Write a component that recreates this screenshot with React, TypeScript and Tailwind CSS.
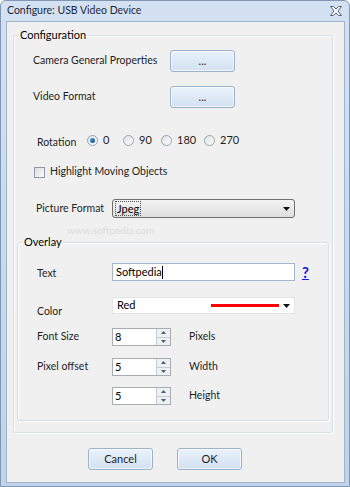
import { ReactNode } from "react";

const font = { fontFamily: "'Segoe UI', Lato, 'Liberation Sans', sans-serif" };

function WinButton({ label, className = "" }: { label: string; className?: string }) {
  return (
    <div
      className={`h-[22px] w-[65px] flex items-center justify-center rounded-[3px] border border-[#9bb2cc] bg-gradient-to-b from-[#eaf2fb] to-[#d2e1f2] shadow-[inset_0_0_0_1px_rgba(255,255,255,0.7)] text-[11px] text-[#1e1e1e] ${className}`}
    >
      {label}
    </div>
  );
}

function Radio({ checked, label, className = "" }: { checked?: boolean; label: string; className?: string }) {
  return (
    <div className={`flex items-center shrink-0 ${className}`}>
      <span className="w-[11px] h-[11px] rounded-full border border-[#97a3b0] bg-gradient-to-br from-[#dfe2e6] to-[#fdfdfd] flex items-center justify-center">
        {checked && <span className="w-[5px] h-[5px] rounded-full bg-gradient-to-br from-[#4a9ad8] to-[#0f4f8c]" />}
      </span>
      <span className="ml-[5px] text-[11px] text-[#1e1e1e]">{label}</span>
    </div>
  );
}

function Arrow() {
  return (
    <svg width="7" height="4" viewBox="0 0 7 4" className="shrink-0">
      <path d="M0 0 H7 L3.5 4 Z" fill="#111" />
    </svg>
  );
}

function Spin({ value }: { value: string }) {
  return (
    <div className="w-[59px] h-[18px] flex border border-[#a9acb3] bg-white shrink-0">
      <div className="flex-1 pl-[2px] text-[11px] leading-[16px] text-black">{value}</div>
      <div className="w-[14px] flex flex-col border-l border-[#c8ccd2] bg-[#eef0f3]">
        <div className="flex-1 flex items-center justify-center border-b border-[#c8ccd2]">
          <svg width="5" height="3" viewBox="0 0 5 3"><path d="M0 3 L2.5 0 L5 3 Z" fill="#4b5b70" /></svg>
        </div>
        <div className="flex-1 flex items-center justify-center">
          <svg width="5" height="3" viewBox="0 0 5 3"><path d="M0 0 H5 L2.5 3 Z" fill="#4b5b70" /></svg>
        </div>
      </div>
    </div>
  );
}

function Group({ title, className = "", children }: { title: string; className?: string; children: ReactNode }) {
  return (
    <fieldset className={`border border-[#d5dfe5] rounded-[3px] shadow-[inset_1px_1px_0_#ffffff,1px_1px_0_#ffffff] ${className}`}>
      <legend className="ml-[5px] px-[1px] text-[11px] leading-[14px] text-black">{title}</legend>
      {children}
    </fieldset>
  );
}

const label = "text-[10.5px] text-[#1e1e1e] whitespace-nowrap shrink-0";

export default function App() {
  return (
    <div style={font} className="w-[350px] h-[487px] flex flex-col bg-gradient-to-b from-[#d3e1f2] to-[#c0d3ea] border border-[#7f97b3] rounded-t-[6px] overflow-hidden relative">
      {/* title bar */}
      <div className="h-[20px] flex items-center justify-between pl-[6px] pr-[7px]">
        <span className="text-[10.5px] text-[#1d2838] whitespace-nowrap">Configure: USB Video Device</span>
        <svg width="12" height="10" viewBox="0 0 12 10">
          <path
            d="M0.5 0.5 H3.5 L6 3 L8.5 0.5 H11.5 L8 5 L11.5 9.5 H8.5 L6 7 L3.5 9.5 H0.5 L4 5 Z"
            fill="#f4f7fb"
            stroke="#4f6580"
            strokeWidth="1"
            strokeLinejoin="round"
          />
        </svg>
      </div>

      {/* client area */}
      <div className="flex-1 ml-[5px] mr-[4px] mb-[3px] bg-[#f0f0f0] border border-[#9fb3ca] pt-[6px] pl-[6px] relative">
        {/* faint watermark */}
        <div className="absolute left-[60px] top-[201px] text-[10px] text-[#dcdcdc]">www.softpedia.com</div>

        <Group title="Configuration" className="relative w-[320px] h-[405px]">
          <div className="mt-[8px] flex items-center pl-[19px]">
            <span className={`w-[137px] ${label}`}>Camera General Properties</span>
            <WinButton label="..." />
          </div>
          <div className="mt-[14px] flex items-center pl-[19px]">
            <span className={`w-[137px] ${label}`}>Video Format</span>
            <WinButton label="..." />
          </div>

          <div className="mt-[24px] h-[16px] flex items-center pl-[23px]">
            <span className={`w-[50px] translate-y-[3px] ${label}`}>Rotation</span>
            <Radio checked label="0" className="w-[36px]" />
            <Radio label="90" className="w-[38px]" />
            <Radio label="180" className="w-[43px]" />
            <Radio label="270" />
          </div>

          <div className="mt-[16px] h-[16px] flex items-center pl-[20px]">
            <span className="w-[11px] h-[11px] border border-[#8e9aa8] bg-gradient-to-br from-[#dcdfe3] to-[#fafafa]" />
            <span className={`ml-[5px] ${label}`}>Highlight Moving Objects</span>
          </div>

          <div className="mt-[19px] h-[19px] flex items-center pl-[22px]">
            <span className={`w-[76px] ${label}`}>Picture Format</span>
            <div className="w-[183px] h-[19px] flex items-center justify-between rounded-[3px] border border-[#707070] bg-gradient-to-b from-[#f4f4f4] to-[#dedede] pl-[2px] pr-[4px]">
              <span className="px-[1px] text-[11px] leading-[13px] text-black border border-dotted border-[#555]">Jpeg</span>
              <Arrow />
            </div>
          </div>

          <Group title="Overlay" className="mt-[17px] ml-[3px] w-[312px] h-[186px]">
            <div className="mt-[14px] h-[18px] flex items-center pl-[19px]">
              <span className={`w-[75px] translate-y-[2px] ${label}`}>Text</span>
              <div className="w-[183px] h-[18px] flex items-center border border-[#a3b8d0] bg-white pl-[3px] text-[11px] text-black">
                Softpedia<span className="w-px h-[13px] bg-black" />
              </div>
              <span className="ml-[7px] text-[15px] leading-[16px] font-bold text-[#1515e8] underline">?</span>
            </div>

            <div className="mt-[16px] h-[17px] flex items-center pl-[19px]">
              <span className={`w-[75px] translate-y-[6px] ${label}`}>Color</span>
              <div className="w-[183px] h-[17px] flex items-center border border-[#e2e3e5] bg-white pl-[4px] pr-[4px]">
                <span className="w-[94px] text-[11px] text-black">Red</span>
                <span className="w-[68px] h-[3px] bg-[#ff0000]" />
                <span className="flex-1" />
                <Arrow />
              </div>
            </div>

            <div className="mt-[14px] h-[18px] flex items-center pl-[19px]">
              <span className={`w-[75px] ${label}`}>Font Size</span>
              <Spin value="8" />
              <span className={`ml-[18px] ${label}`}>Pixels</span>
            </div>
            <div className="mt-[12px] h-[18px] flex items-center pl-[19px]">
              <span className={`w-[75px] ${label}`}>Pixel offset</span>
              <Spin value="5" />
              <span className={`ml-[18px] ${label}`}>Width</span>
            </div>
            <div className="mt-[11px] h-[18px] flex items-center pl-[94px]">
              <Spin value="5" />
              <span className={`ml-[18px] ${label}`}>Height</span>
            </div>
          </Group>
        </Group>

        <div className="mt-[15px] flex pl-[75px] gap-[24px]">
          <WinButton label="Cancel" />
          <WinButton label="OK" />
        </div>
      </div>
    </div>
  );
}
